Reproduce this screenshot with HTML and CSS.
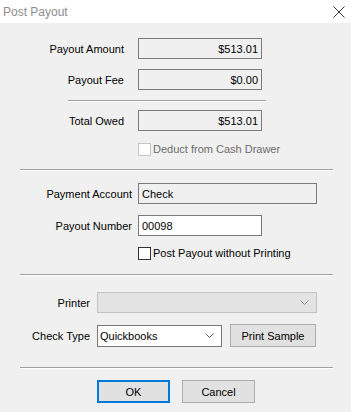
FILE: index.html
```html
<!DOCTYPE html>
<html lang="en">
<head>
    <meta charset="UTF-8">
    <meta name="viewport" content="width=device-width, initial-scale=1.0">
    <title>Post Payout</title>
    <link rel="stylesheet" href="styles.css">
</head>
<body>

    <div class="titlebar">
        <span class="title">Post Payout</span>
        <svg class="close" width="12" height="12" viewBox="0 0 12 12">
            <path d="M0.5 0.5 L11.5 11.5 M11.5 0.5 L0.5 11.5" stroke="#333" stroke-width="1" fill="none"/>
        </svg>
    </div>

    <div class="dialog">

        <div class="row amount-row first">
            <label class="lbl lbl-amount">Payout Amount</label>
            <div class="box readonly money">$513.01</div>
        </div>
        <div class="row amount-row gap10">
            <label class="lbl lbl-amount">Payout Fee</label>
            <div class="box readonly money">$0.00</div>
        </div>

        <div class="sep sep-short"></div>

        <div class="row amount-row total">
            <label class="lbl lbl-amount">Total Owed</label>
            <div class="box readonly money">$513.01</div>
        </div>
        <div class="check-row deduct">
            <span class="checkbox disabled"></span>
            <span class="check-text disabled-text">Deduct from Cash Drawer</span>
        </div>

        <div class="sep sep-full sep-a"></div>

        <div class="row account-row">
            <label class="lbl lbl-account">Payment Account</label>
            <div class="box readonly wide">Check</div>
        </div>
        <div class="row number-row">
            <label class="lbl lbl-account">Payout Number</label>
            <div class="box editable">00098</div>
        </div>
        <div class="check-row noprint">
            <span class="checkbox"></span>
            <span class="check-text">Post Payout without Printing</span>
        </div>

        <div class="sep sep-full sep-b"></div>

        <div class="row printer-row">
            <label class="lbl lbl-printer">Printer</label>
            <div class="combo combo-disabled printer-combo">
                <span class="combo-value"></span>
                <svg class="chev" width="9" height="5" viewBox="0 0 9 5"><path d="M0.5 0.5 L4.5 4.5 L8.5 0.5" stroke="#8a8a8a" fill="none"/></svg>
            </div>
        </div>
        <div class="row checktype-row">
            <label class="lbl lbl-printer">Check Type</label>
            <div class="combo type-combo">
                <span class="combo-value">Quickbooks</span>
                <svg class="chev" width="9" height="5" viewBox="0 0 9 5"><path d="M0.5 0.5 L4.5 4.5 L8.5 0.5" stroke="#5a5a5a" fill="none"/></svg>
            </div>
            <button class="btn sample-btn">Print Sample</button>
        </div>

        <div class="sep sep-full sep-c"></div>

        <div class="button-row">
            <button class="btn btn-default">OK</button>
            <button class="btn">Cancel</button>
        </div>

    </div>

</body>
</html>
```

FILE: styles.css
```css
body {
    margin: 0;
    padding: 0;
    width: 351px;
    height: 412px;
    background-color: #f0f0f0;
    font-family: 'Liberation Sans', Arial, sans-serif;
    font-size: 11px;
    color: #000;
    overflow: hidden;
}

.titlebar {
    height: 23px;
    background-color: #fff;
    display: flex;
    align-items: center;
    justify-content: space-between;
}

.title {
    padding-left: 3px;
    font-size: 12px;
    color: #8c8c8c;
}

.close {
    margin-right: 6px;
}

.dialog {
    display: flex;
    flex-direction: column;
}

.row {
    display: flex;
    align-items: center;
    height: 21px;
}

.lbl {
    text-align: right;
    white-space: nowrap;
}

.lbl-amount {
    width: 124px;
    margin-right: 14px;
}

.lbl-account {
    width: 132px;
    margin-right: 6px;
}

.lbl-printer {
    width: 90px;
    margin-right: 7px;
}

.first { margin-top: 15px; }
.gap10 { margin-top: 10px; }
.total { margin-top: 8px; }

.box {
    box-sizing: border-box;
    height: 21px;
    border: 1px solid #7a7a7a;
    display: flex;
    align-items: center;
    padding: 0 3px;
    width: 124px;
}

.readonly {
    background-color: #f0f0f0;
}

.editable {
    background-color: #fff;
}

.money {
    justify-content: flex-end;
}

.wide {
    width: 179px;
}

.check-row {
    display: flex;
    align-items: center;
    height: 16px;
    padding-left: 138px;
}

.deduct { margin-top: 10px; }
.noprint { margin-top: 9px; }

.checkbox {
    box-sizing: border-box;
    width: 13px;
    height: 13px;
    border: 1px solid #333;
    background-color: #fff;
    margin-right: 2px;
}

.checkbox.disabled {
    border-color: #c6c6c6;
}

.disabled-text {
    color: #6d6d6d;
}

.sep {
    height: 0;
    border-top: 1px solid #a0a0a0;
    border-bottom: 1px solid #fff;
}

.sep-short {
    margin: 10px 0 0 68px;
    width: 198px;
}

.sep-full {
    margin-left: 20px;
    width: 313px;
}

.sep-a { margin-top: 12px; }
.sep-b { margin-top: 13px; }
.sep-c { margin-top: 20px; }

.account-row { margin-top: 12px; }
.number-row { margin-top: 11px; }

.printer-row { margin-top: 16px; }

.checktype-row {
    margin-top: 11px;
    height: 23px;
}

.combo {
    box-sizing: border-box;
    height: 21px;
    display: flex;
    align-items: center;
    justify-content: space-between;
    padding: 0 7px 0 2px;
}

.combo-disabled {
    background-color: #e3e3e3;
    border: 1px solid #c3c3c3;
}

.printer-combo {
    width: 220px;
}

.type-combo {
    width: 125px;
    height: 22px;
    background-color: #fff;
    border: 1px solid #7a7a7a;
}

.btn {
    box-sizing: border-box;
    height: 23px;
    background-color: #e1e1e1;
    border: 1px solid #adadad;
    font-family: 'Liberation Sans', Arial, sans-serif;
    font-size: 11px;
    color: #000;
    padding: 0;
}

.sample-btn {
    width: 86px;
    margin-left: 8px;
}

.button-row {
    display: flex;
    margin-top: 11px;
    padding-left: 97px;
    gap: 12px;
}

.button-row .btn {
    width: 73px;
}

.btn-default {
    border: 2px solid #0078d7;
}
```
